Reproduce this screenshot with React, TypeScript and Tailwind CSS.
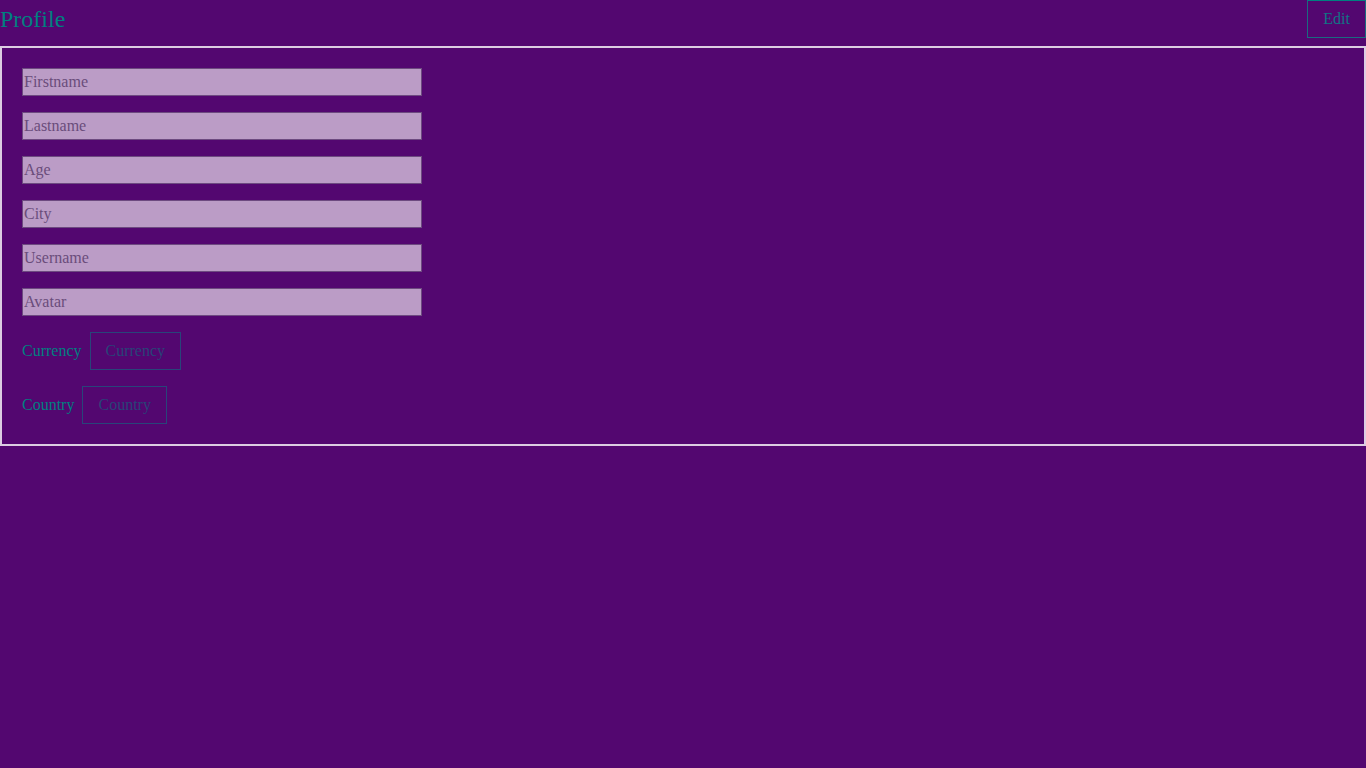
export default function App() {
  const fields = ["Firstname", "Lastname", "Age", "City", "Username", "Avatar"];
  const selects = ["Currency", "Country"];

  return (
    <div className="min-h-screen w-full bg-[#530770] font-['Liberation_Serif',serif] text-[#008080]">
      <div className="flex h-[46px] items-start justify-between">
        <h1 className="text-[24px] leading-[38px]">Profile</h1>
        <button className="h-[38px] border border-[#1a6a80] border-t-[#008080] px-[15px] text-[16px] text-[#0f7585]">
          Edit
        </button>
      </div>

      <div className="flex flex-col gap-4 border-2 border-[#dccde2] p-5">
        {fields.map((f) => (
          <input
            key={f}
            placeholder={f}
            className="h-[28px] w-[400px] border border-[#6d4a80] bg-[#bb9cc6] px-px text-[16px] text-[#4a2a5a] outline-none placeholder:text-[#6a4c7b]"
          />
        ))}
        {selects.map((s) => (
          <div key={s} className="flex items-center gap-2">
            <span className="text-[16px]">{s}</span>
            <button className="h-[38px] border border-[#29447a] px-[15px] text-[16px] text-[#294378]">
              {s}
            </button>
          </div>
        ))}
      </div>
    </div>
  );
}
